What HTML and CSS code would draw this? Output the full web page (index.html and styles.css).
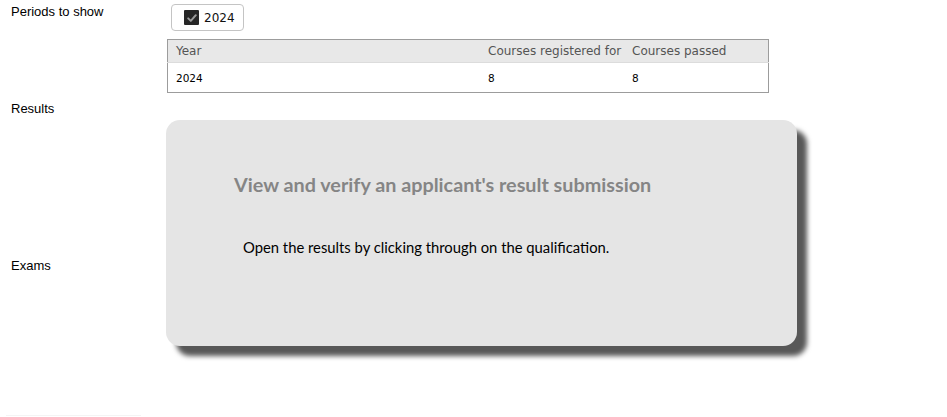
FILE: index.html
```html
<!DOCTYPE html>
<html lang="en">
<head>
<meta charset="utf-8">
<title>Results</title>
<link rel="stylesheet" href="styles.css">
</head>
<body>
<div class="page">
  <div class="form">
    <div class="label label-periods">Periods to show</div>
    <div class="field field-periods">
      <button class="period-btn" type="button">
        <span class="check">
          <svg width="14" height="14" viewBox="0 0 14 14"><path d="M3.2 7.4 L5.8 9.9 L10.8 4.2" fill="none" stroke="#9a9a9a" stroke-width="2" stroke-linecap="round" stroke-linejoin="round"/></svg>
        </span>
        <span class="btn-text">2024</span>
      </button>
      <table class="periods">
        <thead>
          <tr><th class="c-year">Year</th><th class="c-reg">Courses registered for</th><th class="c-pass">Courses passed</th></tr>
        </thead>
        <tbody>
          <tr><td>2024</td><td>8</td><td>8</td></tr>
        </tbody>
      </table>
    </div>
    <div class="label label-results">Results</div>
    <div class="field field-results"></div>
    <div class="label label-exams">Exams</div>
    <div class="field field-exams"></div>
  </div>
  <div class="footer-line"></div>

  <div class="popup">
    <h2 class="popup-title">View and verify an applicant's result submission</h2>
    <p class="popup-text">Open the results by clicking through on the qualification.</p>
  </div>
</div>
</body>
</html>
```

FILE: styles.css
```css
html, body {
  margin: 0;
  padding: 0;
  background: #ffffff;
}
body {
  width: 947px;
  height: 417px;
  overflow: hidden;
  font-family: "Liberation Sans", Arial, sans-serif;
  font-size: 13px;
  color: #000;
}
.page {
  position: relative;
  height: 417px;
}
.form {
  display: grid;
  grid-template-columns: 156px 1fr;
  padding: 4px 0 0 11px;
}
.label {
  line-height: 15px;
}
.label-periods { padding-top: 0; }
.label-results { padding-top: 8px; }
.label-exams { padding-top: 2px; }
.field-periods {
  display: flex;
  flex-direction: column;
  align-items: flex-start;
}
.field-results { height: 163px; }

.period-btn {
  margin-left: 4px;
  display: flex;
  align-items: center;
  gap: 5px;
  height: 27px;
  width: 73px;
  padding: 0 0 0 12px;
  border: 1px solid #c4c4c4;
  border-radius: 4px;
  background: #fff;
  font-family: "DejaVu Sans", Verdana, sans-serif;
  font-size: 12px;
  color: #111;
  box-sizing: border-box;
}
.check {
  width: 15px;
  height: 15px;
  background: #262626;
  border-radius: 1px;
  display: flex;
  align-items: center;
  justify-content: center;
}
.btn-text { line-height: 14px; }

.periods {
  margin-top: 8px;
  width: 602px;
  border-collapse: collapse;
  border: 1px solid #9c9c9c;
  font-family: "DejaVu Sans", Verdana, sans-serif;
}
.periods th {
  background: #e8e8e8;
  color: #555;
  font-weight: normal;
  text-align: left;
  font-size: 12px;
  height: 22px;
  padding: 0 0 0 8px;
  border-bottom: 1px solid #dcdcdc;
}
.periods td {
  font-size: 10.5px;
  color: #000;
  height: 29px;
  padding: 0 0 0 8px;
}
.periods .c-year { width: 304px; }
.periods .c-reg { width: 136px; padding-left: 8px; }

.footer-line {
  position: absolute;
  left: 6px;
  top: 415px;
  width: 135px;
  height: 1px;
  background: #f4f4f4;
}

.popup {
  position: absolute;
  left: 166px;
  top: 120px;
  width: 631px;
  height: 226px;
  box-sizing: border-box;
  background: #e5e5e5;
  border-radius: 14px;
  box-shadow: 10px 10px 5px #585858;
  padding: 52px 0 0 68px;
  font-family: Lato, "Open Sans", sans-serif;
}
.popup-title {
  margin: 0;
  font-size: 19.8px;
  font-weight: bold;
  color: #858585;
  line-height: 24px;
}
.popup-text {
  margin: 42px 0 0 9px;
  font-size: 14.8px;
  color: #000;
  line-height: 18px;
}
```
